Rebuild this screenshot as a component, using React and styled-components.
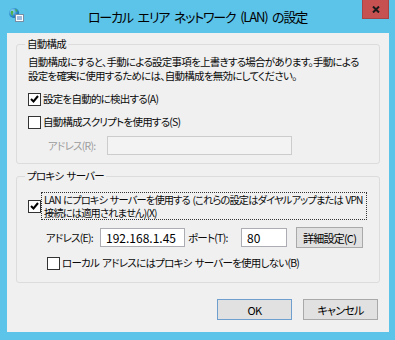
import React from 'react';
import styled, { createGlobalStyle } from 'styled-components';

const GlobalStyle = createGlobalStyle`
    html, body {
        margin: 0;
        padding: 0;
    }
    body {
        background: #5cc3e9;
        font-family: "Noto Sans CJK JP", "Noto Sans", sans-serif;
        font-feature-settings: "palt" 1;
        color: #111;
    }
`

const Window = styled.div`
    width: 395px;
    height: 340px;
    background: #5cc3e9;
    display: flex;
    flex-direction: column;
`

const TitleBar = styled.div`
    height: 33px;
    display: grid;
    grid-template-columns: 1fr auto 1fr;
    align-items: start;

    .icon{
        margin: 7px 0 0 8px;
    }

    .title{
        font-size: 13px;
        line-height: 20px;
        padding-top: 7px;
        letter-spacing: -1.2px;
        word-spacing: 3px;
        color: #000;
        white-space: nowrap;
    }
`

const CloseButton = styled.div`
    justify-self: end;
    margin-right: 6px;
    width: 27px;
    height: 19px;
    box-sizing: border-box;
    background: #c75050;
    border: 1px solid #a54545;
    border-top: none;
    display: flex;
    align-items: center;
    justify-content: center;
`

const Panel = styled.div`
    flex: 1;
    margin: 0 6px 8px 7px;
    background: #f0f0f0;
    padding: 4px 9px 0 9px;
    display: flex;
    flex-direction: column;
    font-size: 10.5px;
    letter-spacing: -0.75px;
    word-spacing: 1.5px;
    color: #0a0a0a;
`

const GroupBox = styled.fieldset`
    margin: ${p => p.$top || 0}px 0 0 0;
    padding: ${p => p.$padTop}px 10px ${p => p.$padBottom}px 11px;
    border: 1px solid #dcdcdc;
    border-radius: 3px;
    min-width: 0;

    legend{
        margin-left: -3px;
        padding: 0 2px;
        line-height: 14px;
    }
`

const Text = styled.p`
    margin: 0;
    line-height: 14px;
    white-space: nowrap;
`

const CheckRow = styled.div`
    display: flex;
    align-items: center;
    margin: ${p => p.$top || 0}px 0 0 ${p => p.$indent || 0}px;
    line-height: 14px;
    white-space: nowrap;

    .label{
        margin-left: 2px;
    }

    .focus{
        padding: 0 3px 0 2px;
        font-size: 10.2px;
        line-height: 13px;
        border: 1px dotted #333;
        letter-spacing: -0.8px;
        word-spacing: 1px;
    }
`

const Box = styled.span`
    width: 13px;
    height: 13px;
    box-sizing: border-box;
    border: 1px solid #333;
    background: #fff;
    flex-shrink: 0;
    display: flex;
    align-items: center;
    justify-content: center;
`

const FieldRow = styled.div`
    display: flex;
    align-items: center;
    margin: ${p => p.$top || 0}px 0 0 ${p => p.$indent || 0}px;
    white-space: nowrap;
    color: ${p => p.$disabled ? '#9c9c9c' : 'inherit'};
`

const FieldLabel = styled.span`
    width: ${p => p.$width}px;
    padding-left: ${p => p.$pad || 0}px;
    flex-shrink: 0;
`

const Input = styled.div`
    width: ${p => p.$width}px;
    height: 19px;
    box-sizing: border-box;
    border: 1px solid ${p => p.$disabled ? '#cccccc' : '#abadb3'};
    background: ${p => p.$disabled ? '#f3f3f3' : '#fff'};
    padding: 0 5px;
    font-size: 12px;
    line-height: 17px;
    letter-spacing: 0;
    color: #000;
    flex-shrink: 0;
`

const Button = styled.div`
    width: ${p => p.$width || 75}px;
    height: 21px;
    margin-left: ${p => p.$gap || 0}px;
    box-sizing: border-box;
    background: #e1e1e1;
    border: 1px solid ${p => p.$default ? '#6f9fcf' : '#a9a9a9'};
    display: flex;
    align-items: center;
    justify-content: center;
    font-size: 11px;
    color: #000;
    flex-shrink: 0;
`

const ButtonBar = styled.div`
    display: flex;
    justify-content: flex-end;
    gap: 11px;
    margin-top: 16px;
    padding-right: 2px;
`

const Check = ({ checked }) => (
    <Box>
        {checked &&
            <svg width="9" height="8" viewBox="0 0 9 8">
                <path d="M1 4 L3.5 6.5 L8 1" fill="none" stroke="#000" strokeWidth="2" />
            </svg>
        }
    </Box>
)

const NetIcon = () => (
    <svg className="icon" width="16" height="16" viewBox="0 0 16 16">
        <defs>
            <radialGradient id="g" cx="0.35" cy="0.35" r="0.7">
                <stop offset="0" stopColor="#a8e6ff" />
                <stop offset="0.6" stopColor="#2f8fd0" />
                <stop offset="1" stopColor="#1b6aa8" />
            </radialGradient>
        </defs>
        <circle cx="6" cy="6" r="5" fill="url(#g)" />
        <path d="M3 4 Q5 3 5.5 5 Q4 7 5 9 L3.5 8 Q2 6 3 4Z" fill="#4fb04a" />
        <path d="M7 2 Q9 2.5 9.5 4 L8 5 Z" fill="#4fb04a" />
        <rect x="7.5" y="7.5" width="8" height="7" fill="#fff" stroke="#7a8ea6" />
        <path d="M9 10 H14 M9 12 H14" stroke="#3b78c0" strokeWidth="1" />
    </svg>
)

const App = () => {
    return (
        <Window>
            <GlobalStyle />
            <TitleBar>
                <NetIcon />
                <span className="title">ローカル エリア ネットワーク (LAN) の設定</span>
                <CloseButton>
                    <svg width="8" height="7" viewBox="0 0 8 7">
                        <path d="M1 0.5 L7 6.5 M7 0.5 L1 6.5" stroke="#1a1a1a" strokeWidth="2" />
                    </svg>
                </CloseButton>
            </TitleBar>
            <Panel>
                <GroupBox $padTop={4} $padBottom={8}>
                    <legend>自動構成</legend>
                    <Text>
                        自動構成にすると、手動による設定事項を上書きする場合があります。手動による<br />
                        設定を確実に使用するためには、自動構成を無効にしてください。
                    </Text>
                    <CheckRow $top={9}>
                        <Check checked />
                        <span className="label">設定を自動的に検出する(A)</span>
                    </CheckRow>
                    <CheckRow $top={9}>
                        <Check />
                        <span className="label">自動構成スクリプトを使用する(S)</span>
                    </CheckRow>
                    <FieldRow $top={7} $indent={20} $disabled>
                        <FieldLabel $width={59}>アドレス(R):</FieldLabel>
                        <Input $width={185} $disabled />
                    </FieldRow>
                </GroupBox>
                <GroupBox $top={5} $padTop={9} $padBottom={12}>
                    <legend>プロキシ サーバー</legend>
                    <CheckRow>
                        <Check checked />
                        <span className="focus">
                            LAN にプロキシ サーバーを使用する (これらの設定はダイヤルアップまたは VPN<br />
                            接続には適用されません)(X)
                        </span>
                    </CheckRow>
                    <FieldRow $top={7} $indent={18}>
                        <FieldLabel $width={54}>アドレス(E):</FieldLabel>
                        <Input $width={85}>192.168.1.45</Input>
                        <FieldLabel $width={53} $pad={3}>ポート(T):</FieldLabel>
                        <Input $width={46}>80</Input>
                        <Button $width={67} $gap={9}>詳細設定(C)</Button>
                    </FieldRow>
                    <CheckRow $top={8} $indent={19}>
                        <Check />
                        <span className="label">ローカル アドレスにはプロキシ サーバーを使用しない(B)</span>
                    </CheckRow>
                </GroupBox>
                <ButtonBar>
                    <Button $default>OK</Button>
                    <Button>キャンセル</Button>
                </ButtonBar>
            </Panel>
        </Window>
    )
}

export default App;
